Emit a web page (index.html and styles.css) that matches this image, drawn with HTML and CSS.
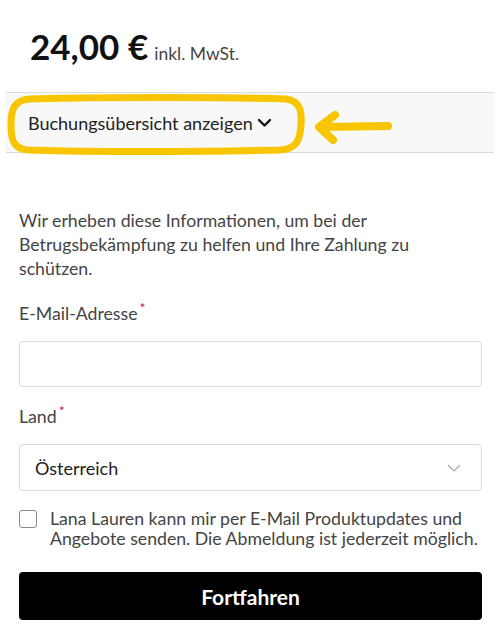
FILE: index.html
```html
<!DOCTYPE html>
<html lang="de">
<head>
  <meta charset="UTF-8">
  <meta name="viewport" content="width=device-width, initial-scale=1.0">
  <title>Checkout</title>
  <link rel="stylesheet" href="styles.css">
</head>
<body>
  <header class="price">
    <span class="amount">24,00 €</span>
    <span class="tax">inkl. MwSt.</span>
  </header>

  <div class="summary">
    <button class="summary-toggle" type="button">
      Buchungsübersicht anzeigen
      <svg class="chev" width="15" height="10" viewBox="0 0 15 10">
        <path d="M2 2 L7.5 7.5 L13 2" fill="none" stroke="#111" stroke-width="2.4" stroke-linecap="round" stroke-linejoin="round"/>
      </svg>
    </button>
    <svg class="markup" width="500" height="64" viewBox="0 0 500 64">
      <path d="M30 6 C 110 4, 220 4, 286 6 C 300 8, 302 18, 301 32 C 300 48, 296 56, 280 57 C 200 59, 90 59, 28 57 C 14 56, 11 48, 11 32 C 11 16, 14 7, 30 6 Z" fill="none" stroke="#f7c600" stroke-width="7"/>
      <path d="M388 33 L321 34 M335 22 L319 34 L333 47" fill="none" stroke="#f7c600" stroke-width="8" stroke-linecap="round" stroke-linejoin="round"/>
    </svg>
  </div>

  <main class="form">
    <p class="intro">Wir erheben diese Informationen, um bei der Betrugsbekämpfung zu helfen und Ihre Zahlung zu schützen.</p>

    <label class="field-label" for="email">E-Mail-Adresse<span class="req">*</span></label>
    <input class="field" id="email" type="email">

    <label class="field-label" for="land">Land<span class="req">*</span></label>
    <div class="select">
      <span>Österreich</span>
      <svg width="14" height="8" viewBox="0 0 14 8">
        <path d="M1 1 L7 7 L13 1" fill="none" stroke="#aaa" stroke-width="1.2"/>
      </svg>
    </div>

    <label class="consent">
      <span class="box"></span>
      <span>Lana Lauren kann mir per E-Mail Produktupdates und Angebote senden. Die Abmeldung ist jederzeit möglich.</span>
    </label>

    <button class="continue" type="button">Fortfahren</button>
  </main>
</body>
</html>
```

FILE: styles.css
```css
body {
  margin: 0;
  font-family: Lato, 'Open Sans', sans-serif;
  background-color: white;
  color: #111;
}

.price {
  padding: 22px 30px 0;
  height: 70px;
  display: flex;
  align-items: baseline;
  gap: 6px;
}

.price .amount {
  font-size: 35px;
  font-weight: bold;
  line-height: 48px;
}

.price .tax {
  font-size: 17.5px;
  color: #444;
}

.summary {
  position: relative;
  margin: 0 6px;
  height: 59px;
  background-color: #f8f8f8;
  border-top: 1px solid #dcdcdc;
  border-bottom: 1px solid #dcdcdc;
  display: flex;
  align-items: center;
}

.summary-toggle {
  background: none;
  border: none;
  padding: 0 0 0 22px;
  font-family: inherit;
  font-size: 18px;
  color: #222;
  display: flex;
  align-items: center;
  gap: 4px;
}

.markup {
  position: absolute;
  left: -6px;
  top: 0;
}

.form {
  padding: 56px 18px 0 19px;
}

.intro {
  margin: 0 0 21px;
  font-size: 17.7px;
  line-height: 24px;
  color: #444;
}

.field-label {
  display: block;
  font-size: 17.7px;
  color: #444;
  line-height: 24px;
}

.req {
  color: #c2185b;
  font-size: 14px;
  vertical-align: top;
  margin-left: 2px;
  position: relative;
  top: -6px;
}

.field {
  display: block;
  box-sizing: border-box;
  width: 100%;
  height: 46px;
  margin: 15px 0 18px;
  border: 1px solid #dadada;
  border-radius: 4px;
  font-size: 17px;
}

.select {
  box-sizing: border-box;
  height: 47px;
  margin: 15px 0 18px;
  padding: 0 20px 0 15px;
  border: 1px solid #dadada;
  border-radius: 4px;
  display: flex;
  justify-content: space-between;
  align-items: center;
  font-size: 18px;
  color: #222;
}

.consent {
  display: flex;
  gap: 13px;
  font-size: 17.7px;
  line-height: 20px;
  color: #444;
}

.consent .box {
  flex: none;
  box-sizing: border-box;
  width: 18px;
  height: 18px;
  margin-top: 1px;
  border: 1.5px solid #888;
  border-radius: 3px;
}

.continue {
  display: block;
  width: 100%;
  height: 48px;
  margin-top: 23px;
  background-color: black;
  color: white;
  border: none;
  border-radius: 4px;
  font-family: inherit;
  font-size: 21px;
  font-weight: bold;
}
```
